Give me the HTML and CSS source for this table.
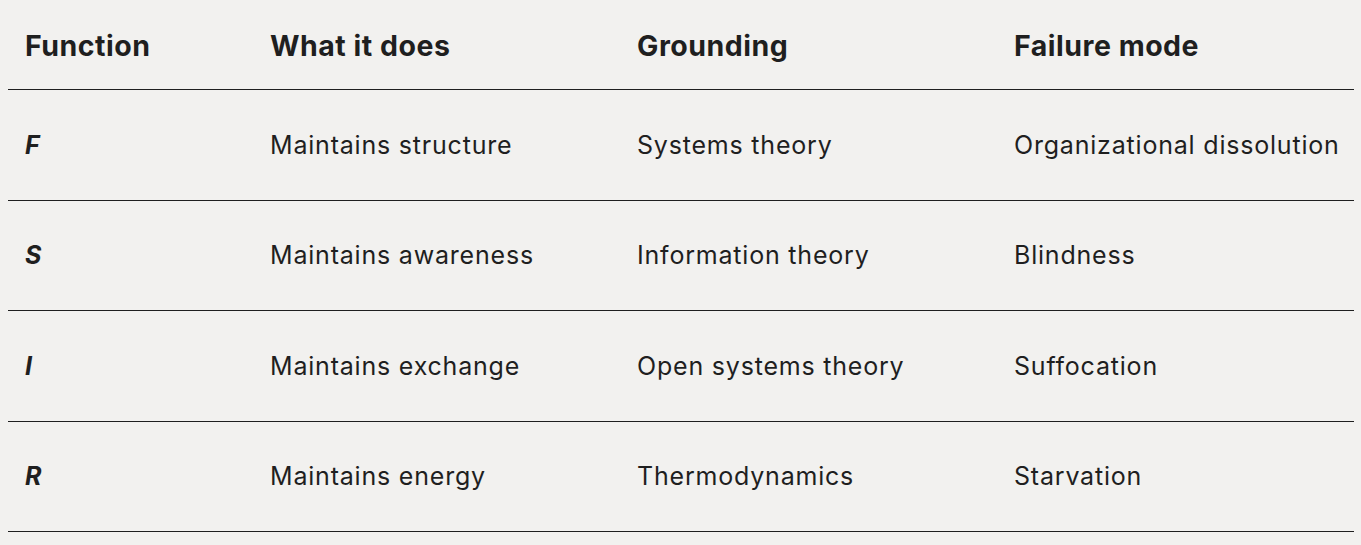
FILE: index.html
```html
<!DOCTYPE html>
<html lang="en">
<head>
<meta charset="utf-8">
<title>Functions</title>
<link rel="stylesheet" href="styles.css">
</head>
<body>
<table class="grid">
  <colgroup>
    <col class="c1">
    <col class="c2">
    <col class="c3">
    <col class="c4">
  </colgroup>
  <thead>
    <tr>
      <th>Function</th>
      <th>What it does</th>
      <th>Grounding</th>
      <th>Failure mode</th>
    </tr>
  </thead>
  <tbody>
    <tr>
      <td class="sym">F</td>
      <td>Maintains structure</td>
      <td>Systems theory</td>
      <td>Organizational dissolution</td>
    </tr>
    <tr>
      <td class="sym">S</td>
      <td>Maintains awareness</td>
      <td>Information theory</td>
      <td>Blindness</td>
    </tr>
    <tr>
      <td class="sym">I</td>
      <td>Maintains exchange</td>
      <td>Open systems theory</td>
      <td>Suffocation</td>
    </tr>
    <tr>
      <td class="sym">R</td>
      <td>Maintains energy</td>
      <td>Thermodynamics</td>
      <td>Starvation</td>
    </tr>
  </tbody>
</table>
</body>
</html>
```
FILE: styles.css
```css
html, body {
  margin: 0;
  padding: 0;
  background: #f2f1ef;
}
body {
  padding: 0 7px 0 8px;
  font-family: Inter, "Noto Sans", sans-serif;
  color: #1f1f1f;
}
.grid {
  width: 1346px;
  border-collapse: collapse;
  table-layout: fixed;
}
.c1 { width: 245px; }
.c2 { width: 367px; }
.c3 { width: 377px; }
.c4 { width: 357px; }
.grid th, .grid td {
  text-align: left;
  vertical-align: middle;
  padding: 0 0 0 17px;
  border-bottom: 1px solid #1f1f1f;
  white-space: nowrap;
}
.grid th {
  height: 88px;
  padding-top: 1px;
  font-size: 28.5px;
  font-weight: 700;
  letter-spacing: 0.5px;
}
.grid td {
  height: 109.5px;
  font-size: 25px;
  font-weight: 400;
  letter-spacing: 0.8px;
}
.grid td.sym {
  font-style: italic;
  font-weight: 700;
  letter-spacing: 0;
}
```
